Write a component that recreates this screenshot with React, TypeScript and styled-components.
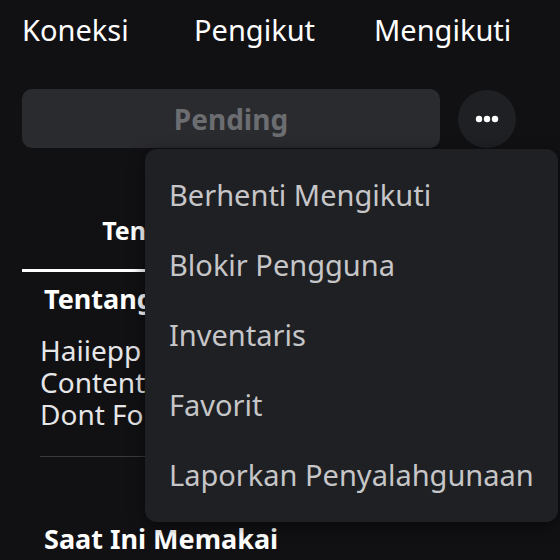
import styled, { createGlobalStyle } from 'styled-components';

const GlobalStyle = createGlobalStyle`
  html, body {
    margin: 0;
    padding: 0;
    background: #111114;
    overflow: hidden;
  }
  body {
    font-family: 'Noto Sans', 'Open Sans', sans-serif;
    color: #ffffff;
  }
`;

interface Stat {
  value: string;
  label: string;
}

const stats: Stat[] = [
  { value: '128', label: 'Koneksi' },
  { value: '136', label: 'Pengikut' },
  { value: '47', label: 'Mengikuti' },
];

const menuItems = [
  'Berhenti Mengikuti',
  'Blokir Pengguna',
  'Inventaris',
  'Favorit',
  'Laporkan Penyalahgunaan',
];

const App = () => {
  return (
    <>
      <GlobalStyle />
      <Page>
        <StatsRow>
          {stats.map((s) => (
            <StatItem key={s.label}>
              <p className={'stat-value'}>{s.value}</p>
              <p className={'stat-label'}>{s.label}</p>
            </StatItem>
          ))}
        </StatsRow>

        <ActionsRow>
          <PendingButton>Pending</PendingButton>
          <MoreButton aria-label="more">
            <svg width="24" height="8" viewBox="0 0 24 8">
              <circle cx="4" cy="4" r="3.2" fill="#fff" />
              <circle cx="12" cy="4" r="3.2" fill="#fff" />
              <circle cx="20" cy="4" r="3.2" fill="#fff" />
            </svg>
          </MoreButton>
          <Menu>
            {menuItems.map((item) => (
              <MenuItem key={item}>{item}</MenuItem>
            ))}
          </Menu>
        </ActionsRow>

        <Tabs>
          <Tab $active>Tentang</Tab>
          <Tab>Aktivitas</Tab>
        </Tabs>

        <Section>
          <SectionTitle>Tentang</SectionTitle>
          <Bio>
            Haiiepp
            <br />
            Content Creator
            <br />
            Dont Forget to Follow
          </Bio>
          <Divider />
          <SectionTitle $spaced>Saat Ini Memakai</SectionTitle>
        </Section>
      </Page>
    </>
  );
};

const Page = styled.div`
  width: 560px;
  height: 560px;
  box-sizing: border-box;
  padding: 0 22px;
  overflow: hidden;
`;

const StatsRow = styled.div`
  display: grid;
  grid-template-columns: 172px 180px auto;
  margin-top: -28px;
`;

const StatItem = styled.div`
  p {
    margin: 0;
  }
  .stat-value {
    font-size: 28px;
    font-weight: 700;
    line-height: 30px;
  }
  .stat-label {
    font-size: 29px;
    line-height: 40px;
    margin-top: 8px;
  }
`;

const ActionsRow = styled.div`
  position: relative;
  display: flex;
  align-items: center;
  gap: 18px;
  margin-top: 39px;
`;

const PendingButton = styled.button`
  width: 418px;
  height: 59px;
  border: none;
  border-radius: 10px;
  background: #2a2b2f;
  color: #6c6d71;
  font-family: 'Noto Sans', sans-serif;
  font-size: 28px;
  font-weight: 700;
`;

const MoreButton = styled.button`
  width: 58px;
  height: 58px;
  border: none;
  border-radius: 50%;
  background: #1f2023;
  display: flex;
  align-items: center;
  justify-content: center;
  padding: 0;
`;

const Menu = styled.div`
  position: absolute;
  top: 60px;
  left: 123px;
  width: 413px;
  height: 373px;
  box-sizing: border-box;
  padding: 10px 0;
  background: #1f2024;
  border-radius: 12px;
  box-shadow: 0 4px 16px rgba(0, 0, 0, 0.5);
  z-index: 10;
  display: flex;
  flex-direction: column;
`;

const MenuItem = styled.div`
  height: 70px;
  display: flex;
  align-items: center;
  padding-left: 24px;
  font-size: 29px;
  color: #c6c6c8;
  white-space: nowrap;
`;

const Tabs = styled.div`
  display: grid;
  grid-template-columns: 262px 250px;
  margin-top: 67px;
`;

const Tab = styled.div<{ $active?: boolean }>`
  text-align: center;
  font-size: 25px;
  font-weight: 700;
  line-height: 30px;
  padding-bottom: 24px;
  color: ${({ $active }) => ($active ? '#ffffff' : '#8a8a8e')};
  border-bottom: 3px solid ${({ $active }) => ($active ? '#ffffff' : 'transparent')};
`;

const Section = styled.div`
  padding-left: 18px;
`;

const SectionTitle = styled.h3<{ $spaced?: boolean }>`
  margin: ${({ $spaced }) => ($spaced ? '65px' : '10px')} 0 0 4px;
  font-size: 27px;
  font-weight: 700;
  line-height: 34px;
  white-space: nowrap;
`;

const Bio = styled.p`
  margin: 18px 0 0;
  font-size: 28px;
  line-height: 32px;
  color: #e6e6e8;
  white-space: nowrap;
`;

const Divider = styled.div`
  margin-top: 26px;
  height: 1px;
  background: #3a3b3f;
`;

export default App;
